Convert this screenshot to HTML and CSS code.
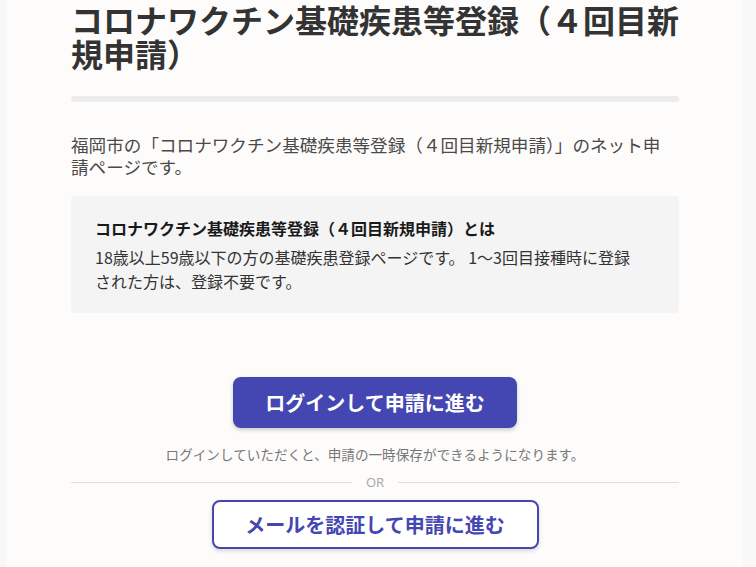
FILE: index.html
```html
<!DOCTYPE html>
<html lang="ja">
<head>
<meta charset="utf-8">
<title>コロナワクチン基礎疾患等登録（４回目新規申請）</title>
<link rel="stylesheet" href="styles.css">
</head>
<body>
<main class="panel">
  <h1 class="title">コロナワクチン基礎疾患等登録（４回目新規申請）</h1>
  <div class="bar"></div>
  <p class="lead">福岡市の「コロナワクチン基礎疾患等登録（４回目新規申請）」のネット申請ページです。</p>
  <section class="info">
    <h2 class="info-title">コロナワクチン基礎疾患等登録（４回目新規申請）とは</h2>
    <p class="info-text">18歳以上59歳以下の方の基礎疾患登録ページです。 1～3回目接種時に登録された方は、登録不要です。</p>
  </section>
  <div class="actions">
    <button class="btn btn-primary" type="button">ログインして申請に進む</button>
    <p class="note">ログインしていただくと、申請の一時保存ができるようになります。</p>
    <div class="divider"><span>OR</span></div>
    <button class="btn btn-outline" type="button">メールを認証して申請に進む</button>
  </div>
</main>
</body>
</html>
```

FILE: styles.css
```css
* { box-sizing: border-box; }
html, body { margin: 0; padding: 0; }
body {
  background: #f8f8f8;
  font-family: "Noto Sans CJK JP", "Noto Sans", sans-serif;
  color: #333;
}
.panel {
  margin-left: 7px;
  width: 736px;
  min-height: 567px;
  background: #fdfcfb;
  padding: 2px 64px 40px;
}
.title {
  margin: 0;
  font-size: 32px;
  line-height: 34px;
  font-weight: 700;
  color: #333;
}
.bar {
  margin-top: 26px;
  height: 6px;
  border-radius: 3px;
  background: #ececec;
}
.lead {
  margin: 32px 0 0;
  max-width: 600px;
  font-size: 17.6px;
  line-height: 22px;
  color: #4a4a4a;
}
.info {
  margin-top: 18px;
  background: #f4f4f5;
  border-radius: 4px;
  padding: 20px 40px 20px 24px;
}
.info-title {
  margin: 0 0 5px;
  font-size: 16px;
  line-height: 24px;
  font-weight: 700;
  color: #1a1a1a;
}
.info-text {
  margin: 0;
  font-size: 16px;
  line-height: 24px;
  color: #333;
}
.actions {
  display: flex;
  flex-direction: column;
  align-items: center;
  margin-top: 64px;
}
.btn {
  font-family: inherit;
  font-weight: 700;
  font-size: 20px;
  line-height: 28px;
  border-radius: 8px;
  cursor: pointer;
}
.btn-primary {
  width: 284px;
  height: 51px;
  background: #4446b1;
  color: #fff;
  border: none;
  box-shadow: 0 2px 4px rgba(0,0,0,0.2);
}
.btn-outline {
  width: 327px;
  height: 49px;
  background: #fff;
  color: #4446b1;
  border: 2px solid #4446b1;
  box-shadow: 0 2px 4px rgba(0,0,0,0.15);
}
.note {
  margin: 16px 0 0;
  font-size: 13.6px;
  line-height: 20px;
  color: #777;
}
.divider {
  align-self: stretch;
  display: flex;
  align-items: center;
  gap: 14px;
  margin: 10px 0 10px;
  font-family: "Noto Sans", sans-serif;
  font-size: 13px;
  line-height: 16px;
  color: #aaa;
}
.divider::before, .divider::after {
  content: "";
  flex: 1;
  height: 1px;
  background: #ddd;
}
```
